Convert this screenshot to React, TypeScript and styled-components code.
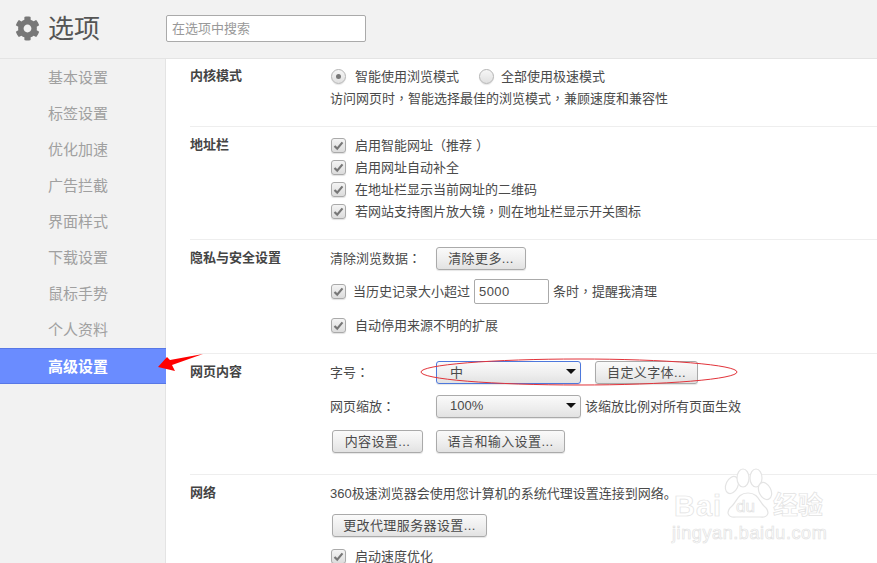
import styled, { createGlobalStyle } from 'styled-components'
import { FaCog } from 'react-icons/fa'

const GlobalStyle = createGlobalStyle`
  html, body {
    margin: 0;
    padding: 0;
    background: #fff;
    overflow: hidden;
  }
  * {
    box-sizing: border-box;
  }
`

const Page = styled.div`
  position: relative;
  width: 877px;
  height: 563px;
  overflow: hidden;
  color: #4a4a4a;
  font-family: 'Liberation Sans', 'Noto Sans CJK SC', sans-serif;
  font-size: 13px;
  text-spacing-trim: space-all;
`

const Header = styled.header`
  display: flex;
  align-items: center;
  height: 59px;
  padding-left: 15px;
  background: #f2f2f2;
  border-bottom: 1px solid #e4e4e4;
`

const Gear = styled(FaCog)`
  width: 25px;
  height: 25px;
  color: #777;
  margin-bottom: 1px;
`

const Title = styled.h1`
  width: 118px;
  margin: 0 0 0 8px;
  font-size: 26px;
  font-weight: 400;
  line-height: 30px;
  color: #555;
`

const Search = styled.input`
  width: 200px;
  height: 27px;
  margin-bottom: 2px;
  padding: 0 5px;
  background: #fff;
  border: 1px solid #aaa;
  border-radius: 2px;
  font: inherit;
  outline: none;
  &::placeholder {
    color: #999;
    opacity: 1;
  }
`

const Body = styled.div`
  display: flex;
  height: 504px;
`

const Sidebar = styled.nav`
  flex: none;
  width: 166px;
  padding-top: 1px;
  background: #f2f2f2;
  border-right: 1px solid #e4e4e4;
`

const NavItem = styled.div<{ $active?: boolean }>`
  height: 36px;
  margin-right: ${p => (p.$active ? '-1px' : '0')};
  padding-left: 48px;
  font-size: 15px;
  line-height: ${p => (p.$active ? '38px' : '36px')};
  font-weight: ${p => (p.$active ? 700 : 400)};
  color: ${p => (p.$active ? '#fff' : '#a0a0a0')};
  background: ${p => (p.$active ? '#6a8cff' : 'transparent')};
  box-shadow: ${p => (p.$active ? 'inset 0 1px #5878e6, inset 0 -1px #5878e6' : 'none')};
`

const Content = styled.main`
  flex: 1;
  min-width: 0;
  padding-left: 24px;
`

const Section = styled.section<{ $top?: number; $bottom?: number; $last?: boolean }>`
  display: grid;
  grid-template-columns: 141px 1fr;
  padding-top: ${p => p.$top ?? 7}px;
  padding-bottom: ${p => p.$bottom ?? 17}px;
  border-bottom: ${p => (p.$last ? 'none' : '1px solid #eee')};
`

const Label = styled.div`
  font-weight: 700;
  line-height: 22px;
  color: #444;
`

const Rows = styled.div`
  display: flex;
  flex-direction: column;
`

const Row = styled.div<{ $mt?: number }>`
  display: flex;
  align-items: center;
  height: 22px;
  margin-top: ${p => p.$mt ?? 0}px;
  white-space: nowrap;
`

const Text = styled.span<{ $flush?: boolean }>`
  margin-bottom: 2px;
  margin-left: ${p => (p.$flush ? '-1px' : '0')};
`

// 句読点だけセル中央に来るTC字形を使う
const Punct = styled.span<{ $indent?: number }>`
  display: inline-block;
  width: 13px;
  text-indent: ${p => p.$indent ?? 0}px;
  font-family: 'Noto Sans CJK TC', sans-serif;
`

const Box = styled.span<{ $gap?: number }>`
  display: inline-flex;
  flex: none;
  align-items: center;
  justify-content: center;
  width: 15px;
  height: 15px;
  margin-right: ${p => p.$gap ?? 9}px;
  background: linear-gradient(#f4f4f4, #dcdcdc);
  border: 1px solid #aaa;
  border-radius: 3px;
  box-shadow: 0 1px 1px rgba(0, 0, 0, 0.12);
`

const Radio = styled.span<{ $checked?: boolean }>`
  display: inline-flex;
  flex: none;
  align-items: center;
  justify-content: center;
  width: 15px;
  height: 15px;
  margin-right: ${p => (p.$checked ? '9px' : '7px')};
  background: linear-gradient(#f6f6f6, #e0e0e0);
  border: 1px solid #b4b4b4;
  border-radius: 50%;
  box-shadow: 0 1px 1px rgba(0, 0, 0, 0.1);
  &::after {
    content: '';
    display: ${p => (p.$checked ? 'block' : 'none')};
    width: 5px;
    height: 5px;
    border-radius: 50%;
    background: #777;
  }
`

const Spacer = styled.span<{ $w: number }>`
  flex: none;
  width: ${p => p.$w}px;
`

const Button = styled.button<{ $w: number }>`
  flex: none;
  width: ${p => p.$w}px;
  height: 23px;
  padding: 0 0 1px;
  background: linear-gradient(#fafafa, #ededed 60%, #e2e2e2);
  border: 1px solid #aaa;
  border-radius: 3px;
  box-shadow: 0 1px 1px rgba(0, 0, 0, 0.1);
  color: #4a4a4a;
  font: inherit;
  letter-spacing: 0.4px;
`

const Select = styled.div<{ $focus?: boolean }>`
  display: flex;
  flex: none;
  align-items: center;
  justify-content: space-between;
  width: 145px;
  height: 23px;
  padding: 0 4px 1px 13px;
  background: linear-gradient(#fafafa, #ededed 60%, #e2e2e2);
  border: 1px solid ${p => (p.$focus ? '#4d78dc' : '#aaa')};
  border-radius: 3px;
  box-shadow: 0 1px 1px rgba(0, 0, 0, 0.1);
`

const Caret = styled.span`
  width: 0;
  height: 0;
  border-left: 5px solid transparent;
  border-right: 5px solid transparent;
  border-top: 5px solid #111;
`

const NumberInput = styled.input`
  flex: none;
  width: 75px;
  height: 25px;
  margin: 0 4px;
  padding: 0 4px;
  background: #fff;
  border: 1px solid #aaa;
  border-radius: 2px;
  color: #4a4a4a;
  font: inherit;
  letter-spacing: 0.4px;
  outline: none;
`

const Overlay = styled.svg`
  position: absolute;
  top: 0;
  left: 0;
  width: 877px;
  height: 563px;
  pointer-events: none;
`

const Watermark = styled.div`
  position: absolute;
  top: 468px;
  left: 672px;
  width: 160px;
  height: 76px;
  color: #fff;
  pointer-events: none;
  -webkit-text-stroke: 0.7px #e2e2e2;
`

const WatermarkBrand = styled.span`
  position: absolute;
  top: 13px;
  left: 2px;
  font-size: 29px;
  font-weight: 700;
  line-height: 50px;
  letter-spacing: 1px;
`

const WatermarkDu = styled.span`
  position: absolute;
  top: 28px;
  left: 64px;
  font-size: 17px;
  line-height: 22px;
`

const WatermarkCn = styled.span`
  position: absolute;
  top: 22px;
  left: 101px;
  font-size: 25px;
  font-weight: 700;
  line-height: 30px;
  white-space: nowrap;
`

const WatermarkUrl = styled.span`
  position: absolute;
  top: 54px;
  left: 0;
  font-size: 18px;
  line-height: 22px;
  letter-spacing: 0.6px;
  white-space: nowrap;
`

const Paw = styled.svg`
  position: absolute;
  top: 0;
  left: 0;
  width: 160px;
  height: 76px;
`

const navItems = ['基本设置', '标签设置', '优化加速', '广告拦截', '界面样式', '下载设置', '鼠标手势', '个人资料', '高级设置']

function Check({ gap }: { gap?: number }) {
  return (
    <Box $gap={gap}>
      <svg width="11" height="11" viewBox="0 0 11 11">
        <path d="M1.5 6 L4.2 8.6 L9.5 2.4" fill="none" stroke="#777" strokeWidth="2.2" />
      </svg>
    </Box>
  )
}

function App() {
  return (
    <Page>
      <GlobalStyle />
      <Header>
        <Gear />
        <Title>选项</Title>
        <Search placeholder="在选项中搜索" />
      </Header>
      <Body>
        <Sidebar>
          {navItems.map(item => (
            <NavItem key={item} $active={item === '高级设置'}>
              {item}
            </NavItem>
          ))}
        </Sidebar>
        <Content>
          <Section $top={6}>
            <Label>内核模式</Label>
            <Rows>
              <Row>
                <Radio $checked />
                <Text>智能使用浏览模式</Text>
                <Spacer $w={20} />
                <Radio />
                <Text>全部使用极速模式</Text>
              </Row>
              <Row>
                <Text $flush>
                  访问网页时<Punct>，</Punct>智能选择最佳的浏览模式<Punct>，</Punct>兼顾速度和兼容性
                </Text>
              </Row>
            </Rows>
          </Section>
          <Section>
            <Label>地址栏</Label>
            <Rows>
              <Row>
                <Check />
                <Text>
                  启用智能网址<Punct>（</Punct>推荐<Punct $indent={4}>）</Punct>
                </Text>
              </Row>
              <Row>
                <Check />
                <Text>启用网址自动补全</Text>
              </Row>
              <Row>
                <Check />
                <Text>在地址栏显示当前网址的二维码</Text>
              </Row>
              <Row>
                <Check />
                <Text>
                  若网站支持图片放大镜<Punct>，</Punct>则在地址栏显示开关图标
                </Text>
              </Row>
            </Rows>
          </Section>
          <Section>
            <Label>隐私与安全设置</Label>
            <Rows>
              <Row>
                <Text $flush>
                  清除浏览数据<Punct>：</Punct>
                </Text>
                <Spacer $w={15} />
                <Button $w={90}>清除更多...</Button>
              </Row>
              <Row $mt={11}>
                <Check gap={7} />
                <Text>当历史记录大小超过</Text>
                <NumberInput defaultValue="5000" />
                <Text>
                  条时<Punct>，</Punct>提醒我清理
                </Text>
              </Row>
              <Row $mt={12}>
                <Check />
                <Text>自动停用来源不明的扩展</Text>
              </Row>
            </Rows>
          </Section>
          <Section $bottom={22}>
            <Label>网页内容</Label>
            <Rows>
              <Row>
                <Text $flush>
                  字号<Punct>：</Punct>
                </Text>
                <Spacer $w={67} />
                <Select $focus>
                  中
                  <Caret />
                </Select>
                <Spacer $w={14} />
                <Button $w={103}>自定义字体...</Button>
              </Row>
              <Row $mt={12}>
                <Text $flush>
                  网页缩放<Punct>：</Punct>
                </Text>
                <Spacer $w={41} />
                <Select>
                  100%
                  <Caret />
                </Select>
                <Spacer $w={4} />
                <Text>该缩放比例对所有页面生效</Text>
              </Row>
              <Row $mt={13}>
                <Spacer $w={1} />
                <Button $w={91}>内容设置...</Button>
                <Spacer $w={13} />
                <Button $w={129}>语言和输入设置...</Button>
              </Row>
            </Rows>
          </Section>
          <Section $last>
            <Label>网络</Label>
            <Rows>
              <Row>
                <Text $flush>360极速浏览器会使用您计算机的系统代理设置连接到网络。</Text>
              </Row>
              <Row $mt={10}>
                <Spacer $w={1} />
                <Button $w={155}>更改代理服务器设置...</Button>
              </Row>
              <Row $mt={9}>
                <Check />
                <Text>启动速度优化</Text>
              </Row>
            </Rows>
          </Section>
        </Content>
      </Body>
      <Watermark>
        <Paw viewBox="0 0 160 76">
          <g fill="#fff" stroke="#e4e4e4" strokeWidth="1.2">
            <ellipse cx="60" cy="17" rx="6" ry="9" transform="rotate(25 60 17)" />
            <ellipse cx="71" cy="10" rx="6" ry="9" />
            <ellipse cx="84" cy="10" rx="6" ry="9" />
            <ellipse cx="93" cy="23" rx="6" ry="9" transform="rotate(-25 93 23)" />
            <path d="M76 25 C66 25 65 33 60 38 C53 44 56 50 64 49 L88 49 C96 50 99 44 92 38 C87 33 86 25 76 25 Z" />
          </g>
        </Paw>
        <WatermarkBrand>Bai</WatermarkBrand>
        <WatermarkDu>du</WatermarkDu>
        <WatermarkCn>经验</WatermarkCn>
        <WatermarkUrl>jingyan.baidu.com</WatermarkUrl>
      </Watermark>
      <Overlay viewBox="0 0 877 563">
        <ellipse cx="579" cy="372" rx="158" ry="13" fill="none" stroke="#e2333a" strokeWidth="1" />
        <polygon points="158,367 167,357 170,360 203,354 172,365 175,371" fill="#f00" />
      </Overlay>
    </Page>
  )
}

export default App
